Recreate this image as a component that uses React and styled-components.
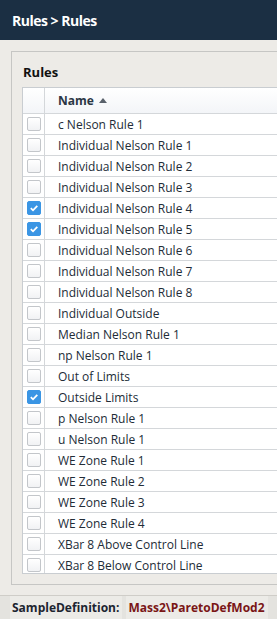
import React from "react";
import styled, { createGlobalStyle } from "styled-components";

const GlobalStyle = createGlobalStyle`
  body {
    margin: 0;
    background: #edebe7;
    font-family: "Open Sans", "Noto Sans", sans-serif;
  }
`;

const Page = styled.div`
  width: 277px;
  height: 619px;
  overflow: hidden;
  display: flex;
  flex-direction: column;
`;

const TopBar = styled.div`
  height: 40px;
  flex: none;
  background: #1b2f43;
  color: #ffffff;
  font-weight: 700;
  font-size: 14px;
  letter-spacing: -0.5px;
  display: flex;
  align-items: center;
  padding-left: 12px;
`;

const Content = styled.div`
  padding: 11px 0 10px 11px;
`;

const Panel = styled.div`
  border: 1px solid #c6c6c4;
  border-right: none;
  padding: 10px 0 10px 10px;
`;

const PanelTitle = styled.div`
  font-weight: 700;
  font-size: 13px;
  color: #111;
  height: 25px;
  line-height: 20px;
  padding-left: 1px;
`;

const TableBox = styled.div`
  height: 485px;
  border: 1px solid #c9cdd1;
  border-right: none;
  background: #fff;
  overflow: hidden;
`;

const Row = styled.div`
  display: flex;
  height: ${(p) => (p.$head ? "25px" : "20px")};
  border-bottom: 1px solid #d4d7da;
  background: ${(p) => (p.$head ? "linear-gradient(#ffffff, #f3f5f8)" : "#fff")};
`;

const CheckCell = styled.div`
  width: 22px;
  flex: none;
  border-right: 1px solid #d4d7da;
  display: flex;
  align-items: center;
  padding-left: 4px;
  box-sizing: border-box;
`;

const NameCell = styled.div`
  flex: 1;
  display: flex;
  align-items: center;
  padding-left: 13px;
  font-size: 12px;
  color: ${(p) => (p.$head ? "#2b3644" : "#222c37")};
  font-weight: ${(p) => (p.$head ? 700 : 400)};
  white-space: nowrap;
`;

const SortArrow = styled.span`
  display: inline-block;
  margin-left: 5px;
  width: 0;
  height: 0;
  border-left: 4px solid transparent;
  border-right: 4px solid transparent;
  border-bottom: 5px solid #59616b;
  margin-top: -1px;
`;

const Box = styled.span`
  width: 14px;
  height: 14px;
  box-sizing: border-box;
  border-radius: 2px;
  display: flex;
  align-items: center;
  justify-content: center;
  border: 1px solid ${(p) => (p.$on ? "#3a95e4" : "#c3c6ca")};
  background: ${(p) => (p.$on ? "#3a95e4" : "linear-gradient(#ffffff, #f1f2f4)")};
`;

const Footer = styled.div`
  flex: 1;
  border-top: 1px solid #cfcdc8;
  background: #e4e3df;
  display: flex;
  align-items: stretch;
  padding-left: 10px;
  gap: 4px;
  font-size: 12px;
  font-weight: 700;
`;

const FooterLabel = styled.div`
  background: #ecebe7;
  color: #1c2530;
  display: flex;
  align-items: center;
  padding: 0 3px 0 2px;
`;

const FooterValue = styled.div`
  background: #ecebe7;
  color: #7a1616;
  display: flex;
  align-items: center;
  padding: 0 3px 0 2px;
`;

const rules = [
  ["c Nelson Rule 1", false],
  ["Individual Nelson Rule 1", false],
  ["Individual Nelson Rule 2", false],
  ["Individual Nelson Rule 3", false],
  ["Individual Nelson Rule 4", true],
  ["Individual Nelson Rule 5", true],
  ["Individual Nelson Rule 6", false],
  ["Individual Nelson Rule 7", false],
  ["Individual Nelson Rule 8", false],
  ["Individual Outside", false],
  ["Median Nelson Rule 1", false],
  ["np Nelson Rule 1", false],
  ["Out of Limits", false],
  ["Outside Limits", true],
  ["p Nelson Rule 1", false],
  ["u Nelson Rule 1", false],
  ["WE Zone Rule 1", false],
  ["WE Zone Rule 2", false],
  ["WE Zone Rule 3", false],
  ["WE Zone Rule 4", false],
  ["XBar 8 Above Control Line", false],
  ["XBar 8 Below Control Line", false],
];

function Check({ on }) {
  return (
    <Box $on={on}>
      {on && (
        <svg width="10" height="10" viewBox="0 0 10 10">
          <path d="M1.8 5.2 L4 7.3 L8.3 2.8" fill="none" stroke="#fff" strokeWidth="1.8" />
        </svg>
      )}
    </Box>
  );
}

export default function App() {
  return (
    <Page>
      <GlobalStyle />
      <TopBar>Rules &gt; Rules</TopBar>
      <Content>
        <Panel>
          <PanelTitle>Rules</PanelTitle>
          <TableBox>
            <Row $head>
              <CheckCell />
              <NameCell $head>
                Name
                <SortArrow />
              </NameCell>
            </Row>
            {rules.map(([name, on]) => (
              <Row key={name}>
                <CheckCell>
                  <Check on={on} />
                </CheckCell>
                <NameCell>{name}</NameCell>
              </Row>
            ))}
          </TableBox>
        </Panel>
      </Content>
      <Footer>
        <FooterLabel>SampleDefinition:</FooterLabel>
        <FooterValue>Mass2\ParetoDefMod2</FooterValue>
      </Footer>
    </Page>
  );
}
